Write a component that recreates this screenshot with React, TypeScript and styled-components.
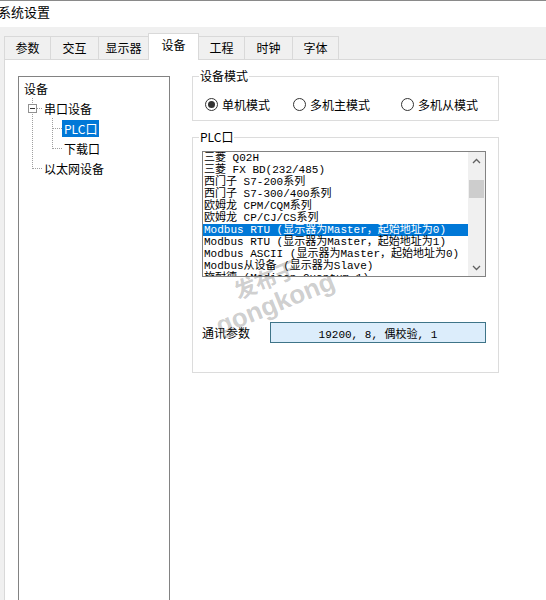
import React from "react";
import styled, { createGlobalStyle } from "styled-components";

const GlobalStyle = createGlobalStyle`
  html, body { margin: 0; padding: 0; background: #ffffff; overflow: hidden; }
  body {
    font-family: "Noto Sans CJK SC", "Microsoft YaHei", sans-serif;
    font-size: 12px;
    color: #000;
  }
`;

const Window = styled.div`
  position: relative;
  width: 546px;
  height: 600px;
  display: flex;
  flex-direction: column;
  overflow: hidden;
`;

const TitleBar = styled.div`
  flex: none;
  height: 26px;
  border-top: 1px solid #8a8a8a;
  background: #ffffff;
  font-size: 13px;
  line-height: 22px;
  text-indent: -2px;
  white-space: nowrap;
`;

const TabArea = styled.div`
  flex: 1;
  min-height: 0;
  display: flex;
  flex-direction: column;
  background: #f0f0f0;
  padding-left: 4px;
`;

const TabStrip = styled.div`
  flex: none;
  height: 32px;
  display: flex;
  align-items: flex-end;
`;

const Tab = styled.div<{ $w: number; $active?: boolean }>`
  box-sizing: border-box;
  width: ${(p) => p.$w}px;
  height: ${(p) => (p.$active ? 27 : 23)}px;
  margin-left: -1px;
  margin-bottom: ${(p) => (p.$active ? -1 : 0)}px;
  border: 1px solid #d9d9d9;
  border-bottom: none;
  background: ${(p) => (p.$active ? "#ffffff" : "#f0f0f0")};
  position: relative;
  z-index: ${(p) => (p.$active ? 1 : 0)};
  display: flex;
  align-items: center;
  justify-content: center;
  padding-bottom: ${(p) => (p.$active ? 4 : 0)}px;
  font-size: 12px;
  line-height: 14px;
  &:first-child { margin-left: 0; }
`;

const Panel = styled.div`
  flex: 1;
  min-height: 0;
  background: #ffffff;
  border-top: 1px solid #d9d9d9;
  border-left: 1px solid #d9d9d9;
  display: flex;
  align-items: flex-start;
  gap: 22px;
  padding: 9px 0 0 13px;
`;

const TreeBox = styled.div`
  flex: none;
  box-sizing: border-box;
  width: 152px;
  height: 560px;
  margin-top: 7px;
  border: 1px solid #828282;
  padding: 1px 0 0 3px;
  display: flex;
  flex-direction: column;
`;

const TreeRow = styled.div`
  height: 20px;
  display: flex;
  align-items: center;
`;

const TreeLabel = styled.span<{ $selected?: boolean }>`
  padding: 0 2px;
  line-height: 17px;
  font-size: 12px;
  white-space: nowrap;
  background: ${(p) => (p.$selected ? "#0078d7" : "transparent")};
  color: ${(p) => (p.$selected ? "#ffffff" : "#000000")};
`;

type GuideKind = "pipe" | "tee" | "elbow";

const Guide: React.FC<{ kind: GuideKind; expander?: boolean }> = ({ kind, expander }) => (
  <svg width="20" height="20" viewBox="0 0 20 20" shapeRendering="crispEdges" style={{ flex: "none" }}>
    <g stroke="#a0a0a0" strokeWidth="1" strokeDasharray="1 1" fill="none">
      {kind === "pipe" && <line x1="10.5" y1="0" x2="10.5" y2="20" />}
      {kind === "tee" && <line x1="10.5" y1="0" x2="10.5" y2="20" />}
      {kind === "elbow" && <line x1="10.5" y1="0" x2="10.5" y2="11" />}
      {kind !== "pipe" && <line x1="11" y1="10.5" x2="20" y2="10.5" />}
    </g>
    {expander && (
      <g>
        <rect x="6.5" y="6.5" width="8" height="8" fill="#ffffff" stroke="#919191" />
        <line x1="8" y1="10.5" x2="13" y2="10.5" stroke="#333333" />
      </g>
    )}
  </svg>
);

const RightCol = styled.div`
  flex: none;
  width: 307px;
  display: flex;
  flex-direction: column;
  gap: 9px;
`;

const Group = styled.fieldset`
  margin: 0;
  padding: 0;
  min-width: 0;
  border: 1px solid #dcdcdc;
`;

const Legend = styled.legend`
  margin-left: 6px;
  padding: 0 1px;
  font-size: 12px;
  line-height: 14px;
`;

const RadioRow = styled.div`
  display: grid;
  grid-template-columns: 88px 108px auto;
  padding: 13px 0 8px 12px;
`;

const RadioItem = styled.label`
  display: flex;
  align-items: center;
  gap: 4px;
  height: 16px;
  font-size: 12px;
  white-space: nowrap;
`;

const RadioCircle = styled.span<{ $checked?: boolean }>`
  box-sizing: border-box;
  width: 13px;
  height: 13px;
  border-radius: 50%;
  border: 1px solid #333333;
  background: #ffffff;
  display: flex;
  align-items: center;
  justify-content: center;
  &::after {
    content: "";
    width: 7px;
    height: 7px;
    border-radius: 50%;
    background: #333333;
    display: ${(p) => (p.$checked ? "block" : "none")};
  }
`;

const PlcBody = styled.div`
  padding: 7px 0 29px 9px;
  display: flex;
  flex-direction: column;
`;

const ListBox = styled.div`
  box-sizing: border-box;
  width: 284px;
  height: 126px;
  border: 1px solid #828282;
  background: #ffffff;
  display: flex;
`;

const ListItems = styled.div`
  flex: 1;
  min-width: 0;
  overflow: hidden;
  display: flex;
  flex-direction: column;
`;

const ListItem = styled.div<{ $selected?: boolean }>`
  flex: none;
  height: 12px;
  line-height: 12px;
  font-family: "Liberation Mono", "Noto Sans CJK SC", monospace;
  font-size: 11px;
  white-space: pre;
  padding-left: 1px;
  background: ${(p) => (p.$selected ? "#0078d7" : "transparent")};
  color: ${(p) => (p.$selected ? "#ffffff" : "#000000")};
`;

const ScrollBar = styled.div`
  flex: none;
  width: 17px;
  background: #f0f0f0;
  display: flex;
  flex-direction: column;
`;

const ScrollButton = styled.div`
  flex: none;
  height: 17px;
  display: flex;
  align-items: center;
  justify-content: center;
`;

const ScrollTrack = styled.div`
  flex: 1;
  padding-top: 11px;
`;

const ScrollThumb = styled.div`
  height: 18px;
  margin: 0 1px;
  background: #cdcdcd;
`;

const Chevron: React.FC<{ up?: boolean }> = ({ up }) => (
  <svg width="9" height="6" viewBox="0 0 9 6">
    <polyline
      points={up ? "1,5 4.5,1.5 8,5" : "1,1 4.5,4.5 8,1"}
      fill="none"
      stroke="#606060"
      strokeWidth="1.3"
    />
  </svg>
);

const ParamRow = styled.div`
  margin-top: 45px;
  display: flex;
  align-items: center;
`;

const ParamLabel = styled.span`
  width: 68px;
  font-size: 12px;
  white-space: nowrap;
`;

const ParamBox = styled.div`
  box-sizing: border-box;
  width: 216px;
  height: 21px;
  border: 1px solid #3e7488;
  background: #dcedfb;
  display: flex;
  align-items: center;
  justify-content: center;
  font-family: "Liberation Mono", "Noto Sans CJK SC", monospace;
  font-size: 11px;
  white-space: pre;
`;

const WaterMark = styled.div`
  position: absolute;
  left: 206px;
  top: 268px;
  width: 130px;
  transform: rotate(-22deg);
  transform-origin: center center;
  color: rgba(90, 90, 90, 0.3);
  font-weight: bold;
  pointer-events: none;
  display: flex;
  flex-direction: column;
  align-items: center;
  z-index: 5;
`;

const WaterLine = styled.span<{ $size: number }>`
  font-size: ${(p) => p.$size}px;
  line-height: ${(p) => p.$size + 1}px;
  font-family: "Liberation Sans", "Noto Sans CJK SC", sans-serif;
  white-space: nowrap;
`;

const tabs = [
  { label: "参数", w: 47 },
  { label: "交互", w: 49 },
  { label: "显示器", w: 51 },
  { label: "设备", w: 51, active: true },
  { label: "工程", w: 47 },
  { label: "时钟", w: 49 },
  { label: "字体", w: 47 },
];

const plcItems = [
  "三菱 Q02H",
  "三菱 FX BD(232/485)",
  "西门子 S7-200系列",
  "西门子 S7-300/400系列",
  "欧姆龙 CPM/CQM系列",
  "欧姆龙 CP/CJ/CS系列",
  "Modbus RTU (显示器为Master，起始地址为0)",
  "Modbus RTU (显示器为Master，起始地址为1)",
  "Modbus ASCII (显示器为Master，起始地址为0)",
  "Modbus从设备 (显示器为Slave)",
  "施耐德 (Modicon Quantum 1)",
];

export default function App() {
  return (
    <Window>
      <GlobalStyle />
      <TitleBar>系统设置</TitleBar>
      <TabArea>
        <TabStrip>
          {tabs.map((t) => (
            <Tab key={t.label} $w={t.w} $active={t.active}>
              {t.label}
            </Tab>
          ))}
        </TabStrip>
        <Panel>
          <TreeBox>
            <TreeRow>
              <TreeLabel>设备</TreeLabel>
            </TreeRow>
            <TreeRow>
              <Guide kind="tee" expander />
              <TreeLabel>串口设备</TreeLabel>
            </TreeRow>
            <TreeRow>
              <Guide kind="pipe" />
              <Guide kind="tee" />
              <TreeLabel $selected>PLC口</TreeLabel>
            </TreeRow>
            <TreeRow>
              <Guide kind="pipe" />
              <Guide kind="elbow" />
              <TreeLabel>下载口</TreeLabel>
            </TreeRow>
            <TreeRow>
              <Guide kind="elbow" />
              <TreeLabel>以太网设备</TreeLabel>
            </TreeRow>
          </TreeBox>
          <RightCol>
            <Group>
              <Legend>设备模式</Legend>
              <RadioRow>
                <RadioItem>
                  <RadioCircle $checked />
                  单机模式
                </RadioItem>
                <RadioItem>
                  <RadioCircle />
                  多机主模式
                </RadioItem>
                <RadioItem>
                  <RadioCircle />
                  多机从模式
                </RadioItem>
              </RadioRow>
            </Group>
            <Group>
              <Legend>PLC口</Legend>
              <PlcBody>
                <ListBox>
                  <ListItems>
                    {plcItems.map((item, i) => (
                      <ListItem key={item} $selected={i === 6}>
                        {item}
                      </ListItem>
                    ))}
                  </ListItems>
                  <ScrollBar>
                    <ScrollButton>
                      <Chevron up />
                    </ScrollButton>
                    <ScrollTrack>
                      <ScrollThumb />
                    </ScrollTrack>
                    <ScrollButton>
                      <Chevron />
                    </ScrollButton>
                  </ScrollBar>
                </ListBox>
                <ParamRow>
                  <ParamLabel>通讯参数</ParamLabel>
                  <ParamBox>19200, 8, 偶校验, 1</ParamBox>
                </ParamRow>
              </PlcBody>
            </Group>
          </RightCol>
        </Panel>
      </TabArea>
      <WaterMark>
        <WaterLine $size={22}>发布于</WaterLine>
        <WaterLine $size={26}>gongkong</WaterLine>
      </WaterMark>
    </Window>
  );
}
